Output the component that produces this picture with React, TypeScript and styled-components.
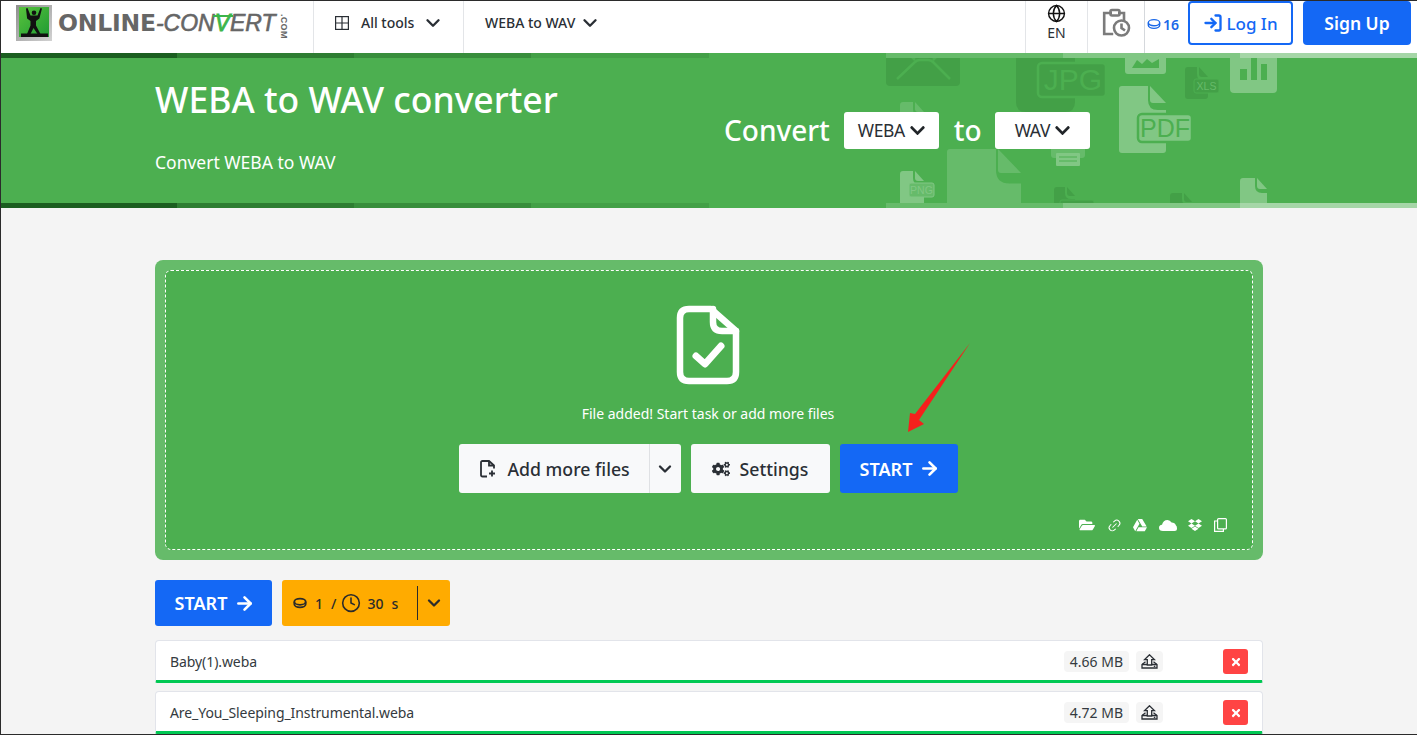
import React from "react";
import styled, { createGlobalStyle } from "styled-components";
import { ArrowRight, ChevronDown, Clock, Globe, Link2, LogIn } from "lucide-react";
import { FaChevronDown, FaCogs, FaDropbox, FaFolderOpen, FaGoogleDrive, FaTimes } from "react-icons/fa";

const Global = createGlobalStyle`
  html, body { margin: 0; padding: 0; background: #f4f4f4; }
  body { font-family: "Noto Sans", "Open Sans", sans-serif; color: #212529; }
  * { box-sizing: border-box; }
`;

const Page = styled.div`
  position: relative;
  width: 1417px;
  height: 735px;
  overflow: hidden;
  background: #f4f4f4;
  border-top: 1px solid #2b2b2b;
  border-left: 1px solid #2b2b2b;
  border-bottom: 1px solid #2b2b2b;
`;

const Header = styled.header`
  display: flex;
  align-items: stretch;
  height: 52px;
  background: #fff;
`;
const LogoBox = styled.a`
  display: flex;
  align-items: flex-start;
  width: 312px;
  padding: 4px 0 0 15px;
`;
const LogoMark = styled.svg`
  width: 36px;
  height: 36px;
  flex: none;
`;
const LogoWord = styled.span`
  display: flex;
  align-items: baseline;
  margin: 0 0 0 6px;
  height: 36px;
  line-height: 36px;
  color: #666;
  white-space: nowrap;
`;
const LogoBold = styled.span`
  font: 700 23.5px/36px "DejaVu Sans", sans-serif;
  letter-spacing: -0.2px;
`;
const LogoItalic = styled.span`
  font: italic 400 23px/36px "Liberation Sans", sans-serif;
  -webkit-text-stroke: 0.6px #666;
`;
const LogoV = styled.span`
  position: relative;
  color: #3cb54a;
  -webkit-text-stroke: 0.8px #3cb54a;
  &::before {
    content: "";
    position: absolute;
    left: -2px;
    top: 5px;
    width: 20px;
    height: 2px;
    background: #3cb54a;
  }
`;
const LogoCom = styled.span`
  font: 700 9px/9px "Liberation Sans", sans-serif;
  color: #666;
  writing-mode: vertical-rl;
  margin: 9px 0 0 3px;
  align-self: flex-start;
  letter-spacing: 0.3px;
`;

const NavItem = styled.div<{ $w: number }>`
  display: flex;
  align-items: center;
  width: ${(p) => p.$w}px;
  padding: 0 0 9px 21px;
  border-left: 1px solid #e3e5e8;
  font-size: 14px;
  font-weight: 500;
  color: #2a2f35;
  &:last-of-type { border-right: 1px solid #e3e5e8; }
`;
const GridIcon = styled.svg`
  width: 14px;
  height: 14px;
  margin-right: 12px;
  flex: none;
`;
const NavCaret = styled(ChevronDown)<{ $ml: number }>`
  margin-left: ${(p) => p.$ml}px;
  flex: none;
`;
const HeaderRight = styled.div`
  display: flex;
  align-items: stretch;
  margin-left: auto;
  padding-right: 6px;
`;
const LangBox = styled.div`
  display: flex;
  flex-direction: column;
  align-items: center;
  width: 62px;
  padding-top: 3px;
  border-left: 1px solid #e3e5e8;
  font-size: 14px;
  line-height: 20px;
  color: #2a2f35;
`;
const HistoryBox = styled.div`
  display: flex;
  align-items: flex-start;
  justify-content: center;
  width: 58px;
  padding-top: 7px;
  border-left: 1px solid #e3e5e8;
  border-right: 1px solid #d5d8dc;
`;
const Credits = styled.div`
  display: flex;
  align-items: center;
  gap: 2px;
  width: 43px;
  padding: 0 0 6px 2px;
  color: #1a68e8;
  font-size: 14px;
  font-weight: 600;
`;
const LoginBtn = styled.button`
  display: flex;
  align-items: center;
  justify-content: center;
  gap: 3px;
  width: 105px;
  height: 44px;
  padding: 0;
  background: #fff;
  border: 2px solid #1468f5;
  border-radius: 4px;
  color: #1468f5;
  font: 500 17px "Noto Sans", sans-serif;
`;
const SignupBtn = styled.button`
  width: 108px;
  height: 44px;
  margin-left: 10px;
  padding: 0;
  background: #1468f5;
  border: 0;
  border-radius: 4px;
  color: #fff;
  font: 600 17.5px "Noto Sans", sans-serif;
`;

const Hero = styled.section`
  position: relative;
  display: flex;
  flex-direction: column;
  height: 155px;
  background: #4caf50;
`;
const Decor = styled.svg`
  position: absolute;
  left: 879px;
  top: 0;
  width: 420px;
  height: 155px;
`;
const Stripes = styled.div`
  position: relative;
  display: grid;
  grid-template-columns: 176px 177px 177px 178px 177px 177px 177px 177px;
  height: 5px;
  flex: none;
`;
const Stripe = styled.i<{ $c: string }>`
  background: ${(p) => p.$c};
`;
const HeroBody = styled.div`
  position: relative;
  flex: 1;
  display: flex;
  padding-left: 154px;
`;
const HeroLeft = styled.div`
  width: 569px;
  flex: none;
`;
const Title = styled.h1`
  margin: 16px 0 0;
  font-size: 35.5px;
  line-height: 50px;
  font-weight: 500;
  color: #fff;
`;
const Subtitle = styled.p`
  margin: 25px 0 0;
  font-size: 17.5px;
  line-height: 26px;
  color: #fff;
`;
const ConvertRow = styled.div`
  display: flex;
  align-items: center;
  height: 37px;
  margin-top: 54px;
  color: #fff;
  font-size: 28px;
  line-height: 35px;
  font-weight: 500;
`;
const ConvertLabel = styled.span<{ $l: number; $r: number }>`
  margin: 0 ${(p) => p.$r}px 0 ${(p) => p.$l}px;
  padding-bottom: 1px;
`;
const FormatSelect = styled.div<{ $pad: number }>`
  display: flex;
  align-items: center;
  justify-content: flex-start;
  gap: 4px;
  width: 95px;
  height: 37px;
  padding-left: ${(p) => p.$pad}px;
  background: #fff;
  border-radius: 3px;
  font-size: 17.5px;
  font-weight: 400;
  letter-spacing: -0.4px;
  color: #2a2f35;
`;

const Main = styled.main`
  padding: 52px 154px 0;
`;
const Panel = styled.section`
  height: 300px;
  padding: 10px;
  background: #66bb6a;
  border-radius: 8px;
`;
const Drop = styled.div`
  display: flex;
  flex-direction: column;
  align-items: center;
  height: 280px;
  padding: 34px 26px 0 24px;
  background: #4caf50;
  border: 1px dashed #fff;
  border-radius: 6px;
  color: #fff;
`;
const FileCheckIcon = styled.svg`
  width: 64px;
  height: 80px;
  flex: none;
`;
const DropText = styled.p`
  margin: 19px 0 0;
  font-size: 14px;
  line-height: 20px;
  color: #fff;
`;
const Buttons = styled.div`
  display: flex;
  gap: 10px;
  margin-top: 20px;
`;
const LightBtn = styled.div`
  display: flex;
  align-items: center;
  height: 49px;
  background: #f8f9fa;
  border-radius: 3px;
  font-size: 17.7px;
  font-weight: 500;
  color: #2a2f35;
`;
const AddMain = styled.span`
  display: flex;
  align-items: center;
  gap: 11px;
  width: 191px;
  height: 100%;
  padding-left: 21px;
  border-right: 1px solid #dfe1e4;
`;
const AddCaret = styled.span`
  display: flex;
  align-items: center;
  justify-content: center;
  width: 31px;
`;
const SettingsBtn = styled(LightBtn)`
  width: 139px;
  justify-content: center;
  gap: 10px;
`;
const StartBtn = styled.button<{ $w: number; $h: number }>`
  display: flex;
  align-items: center;
  justify-content: center;
  gap: 7px;
  width: ${(p) => p.$w}px;
  height: ${(p) => p.$h}px;
  padding: 0 0 0 3px;
  background: #1468f5;
  border: 0;
  border-radius: 3px;
  color: #fff;
  font: 600 18px "Noto Sans", sans-serif;
`;
const Sources = styled.div`
  display: flex;
  align-items: center;
  align-self: flex-end;
  gap: 11.6px;
  margin: 23px -1px 0 0;
  height: 18px;
  color: #fff;
`;
const Actions = styled.div`
  display: flex;
  gap: 10px;
  margin-top: 20px;
`;
const CostBtn = styled.div`
  display: flex;
  align-items: center;
  width: 168px;
  height: 46px;
  padding-left: 11px;
  background: #ffab00;
  border-radius: 3px;
  font-size: 14px;
  font-weight: 500;
  color: #2b2b2b;
`;
const CostPart = styled.span`
  display: flex;
  align-items: center;
  gap: 8px;
  width: 124px;
`;
const CostClock = styled(Clock)`
  margin: 0 -2px 0 -3px;
`;
const CostSep = styled.span`
  width: 1px;
  height: 34px;
  background: #2b2b2b;
`;
const CostCaret = styled.span`
  display: flex;
  flex: 1;
  justify-content: center;
`;
const Files = styled.div`
  display: flex;
  flex-direction: column;
  gap: 8px;
  margin-top: 14px;
`;
const FileRow = styled.div`
  display: flex;
  align-items: center;
  height: 43px;
  padding: 2px 14px 0;
  background: #fff;
  border: 1px solid #e2e4ea;
  border-bottom: 3px solid #00c853;
  border-radius: 4px 4px 2px 2px;
  font-size: 14px;
  color: #343a40;
`;
const FileName = styled.span`
  flex: 1;
  letter-spacing: -0.08px;
`;
const Chip = styled.span<{ $p: number }>`
  display: flex;
  align-items: center;
  justify-content: center;
  height: 21px;
  padding: 0 ${(p) => p.$p}px;
  margin-left: 7px;
  background: #f5f5f5;
  border-radius: 4px;
`;
const RemoveBtn = styled.button`
  display: flex;
  align-items: center;
  justify-content: center;
  width: 25px;
  height: 25px;
  margin: 0 0 0 60px;
  padding: 0;
  background: #ff4444;
  border: 0;
  border-radius: 3px;
  color: #fff;
`;
const RedArrow = styled.svg`
  position: absolute;
  left: 899px;
  top: 335px;
  width: 80px;
  height: 105px;
`;

const greens = ["#1b5e20", "#2e7d32", "#388e3c", "#43a047", "#4caf50", "#66bb6a", "#81c784", "#a5d6a7"];

const Coin = ({ s = 16, c = "currentColor", w = 1.6 }: { s?: number; c?: string; w?: number }) => (
  <svg width={s} height={s} viewBox="0 0 16 16" fill="none" stroke={c} strokeWidth={w}>
    <ellipse cx="8" cy="6.500" rx="6.500" ry="3.500" />
    <path d="M1.500 6.500v3c0 1.900 2.900 3.500 6.500 3.500s6.500-1.600 6.500-3.500v-3" />
  </svg>
);

const UploadTray = () => (
  <svg width="17" height="15" viewBox="0 0 17 15" fill="none" stroke="#2a2f35" strokeWidth="1.300">
    <path d="M4.500 7.800 1 10.500V14h15v-3.500l-3.500-2.700" />
    <path d="M1 10.500h5M11 10.500h5" />
    <path d="M8.500 .8 3.600 5.600h2.700v5.400h4.400V5.600h2.700z" fill="#f5f5f5" />
    <path d="M12.800 12.300h1.500" />
  </svg>
);

const FileIconShape = ({ x, y, w, h, c, fold = 12 }: { x: number; y: number; w: number; h: number; c: string; fold?: number }) => (
  <g fill={c}>
    <path d={`M${x + 3} ${y}H${x + w - fold - 2}v${fold - 2}q0 ${fold / 2 + 2} ${fold / 2 + 2} ${fold / 2 + 2}H${x + w}V${y + h - 3}q0 3-3 3H${x + 3}q-3 0-3-3V${y + 3}q0-3 3-3z`} />
    <path d={`M${x + w - fold} ${y}L${x + w} ${y + fold + 1}H${x + w - fold + 3}q-3 0-3-3z`} />
  </g>
);

const HeroDecor = () => (
  <Decor viewBox="880 53 420 155">
    <rect x="886" y="40" width="74" height="46" rx="4" fill="#43a047" />
    <path d="M897 79 915 62q2-2 5-2h8q3 0 5 2l17 17M908 53l7 7M940 53l-7 7" stroke="#4caf50" strokeWidth="2.500" fill="none" />
    <path d="M1016 40h59v62q0 10-10 10h-39q-10 0-10-10z" fill="#43a047" />
    <rect x="1038" y="63" width="68" height="34" rx="4" fill="#43a047" stroke="#4caf50" strokeWidth="2.500" />
    <text x="1073" y="90" textAnchor="middle" fontSize="30" fontFamily="Liberation Sans" fill="#4caf50">JPG</text>
    <rect x="1125" y="40" width="41" height="34" rx="3" fill="#81c784" />
    <path d="M1132 68l5-8 5 4 5-5 5 4 7-4v9z" fill="#4caf50" />
    <FileIconShape x={1185} y={67} w={23} h={32} c="#43a047" fold={9} />
    <rect x="1194" y="79" width="25" height="14" rx="2" fill="#43a047" stroke="#4caf50" strokeWidth="1" />
    <text x="1206.500" y="90" textAnchor="middle" fontSize="10.500" fontFamily="Liberation Sans" fill="#66bb6a">XLS</text>
    <rect x="1230" y="40" width="47" height="53" rx="4" fill="#81c784" />
    <path d="M1240 69h7v11h-7zM1251 58h6v22h-6zM1261 64h6v16h-6z" fill="#4caf50" />
    <FileIconShape x={900} y={102} w={24} h={20} c="#66bb6a" fold={9} />
    <FileIconShape x={1119} y={86} w={47} h={67} c="#81c784" fold={16} />
    <rect x="1138" y="114" width="54" height="28" rx="4" fill="#81c784" stroke="#4caf50" strokeWidth="2.500" />
    <text x="1165" y="137" textAnchor="middle" fontSize="25" fontFamily="Liberation Sans" fill="#4caf50">PDF</text>
    <rect x="1051" y="140" width="34" height="18" rx="3" fill="#66bb6a" />
    <rect x="1056" y="153" width="24" height="13" rx="1" fill="#81c784" />
    <path d="M1059 157h18M1059 161h18" stroke="#4caf50" />
    <FileIconShape x={947} y={149} w={74} h={60} c="#66bb6a" fold={23} />
    <FileIconShape x={900} y={171} w={24} h={36} c="#81c784" fold={9} />
    <rect x="909" y="183" width="25" height="14" rx="2" fill="#66bb6a" stroke="#81c784" strokeWidth="1" />
    <text x="921.500" y="194" textAnchor="middle" fontSize="10.500" fontFamily="Liberation Sans" fill="#81c784">PNG</text>
    <FileIconShape x={1054} y={187} w={21} h={24} c="#43a047" fold={8} />
    <rect x="1060" y="200" width="34" height="12" rx="2" fill="#43a047" stroke="#4caf50" />
    <FileIconShape x={1170} y={193} w={22} h={16} c="#43a047" fold={8} />
    <FileIconShape x={1240} y={178} w={27} h={32} c="#81c784" fold={10} />
  </Decor>
);

export default function App() {
  return (
    <>
      <Global />
      <Page>
        <Header>
          <LogoBox>
            <LogoMark viewBox="0 0 36 36">
              <defs>
                <linearGradient id="frame" x1="0" y1="0" x2="1" y2="1">
                  <stop offset="0" stopColor="#8e8e8e" />
                  <stop offset="1" stopColor="#d2d2d2" />
                </linearGradient>
                <linearGradient id="lawn" x1="0" y1="0" x2="1" y2="1">
                  <stop offset="0" stopColor="#58c33c" />
                  <stop offset="1" stopColor="#1f9a34" />
                </linearGradient>
              </defs>
              <rect width="36" height="36" fill="url(#frame)" />
              <rect x="3" y="2" width="30" height="30" fill="url(#lawn)" />
              <path d="M10 3.500l1.500-.5 3 7.500h7l3-7.500 1.500.5-2.600 10-3.400 2.500v4.500l4.500 8.500h-3l-4-6-3 6h-3.500l3.500-8.500V16l-3.400-2.500z" fill="#111" />
              <circle cx="18" cy="7.800" r="2.300" fill="#111" />
              <rect x="5" y="28.500" width="27" height="3.500" fill="#111" />
            </LogoMark>
            <LogoWord>
              <LogoBold>ONLINE</LogoBold>
              <LogoItalic>
                -CON<LogoV>V</LogoV>ERT
              </LogoItalic>
              <LogoCom>.COM</LogoCom>
            </LogoWord>
          </LogoBox>
          <NavItem $w={150}>
            <GridIcon viewBox="0 0 14 14" fill="none" stroke="#2a2f35" strokeWidth="1.200">
              <rect x=".6" y=".6" width="12.800" height="12.800" />
              <path d="M7 .6v12.800M.6 7h12.800" />
            </GridIcon>
            All tools
            <NavCaret $ml={8} size={22} strokeWidth={2.600} />
          </NavItem>
          <NavItem $w={158}>
            WEBA to WAV
            <NavCaret $ml={4} size={22} strokeWidth={2.600} />
          </NavItem>
          <HeaderRight>
            <LangBox>
              <Globe size={19} strokeWidth={1.800} color="#111" />
              EN
            </LangBox>
            <HistoryBox>
              <svg width="30" height="30" viewBox="0 0 30 30" fill="none" stroke="#7b7b7b" strokeWidth="2.600">
                <path d="M11 5H3.200v21h9" />
                <path d="M17 5h6v8" />
                <rect x="9.500" y="2" width="9" height="5.500" rx="1.500" />
                <circle cx="20.500" cy="20" r="7.500" />
                <path d="M20.500 15.500V20l3.500 2.500" />
              </svg>
            </HistoryBox>
            <Credits>
              <Coin s={14} />
              16
            </Credits>
            <LoginBtn>
              <LogIn size={20} strokeWidth={2.800} />
              Log In
            </LoginBtn>
            <SignupBtn>Sign Up</SignupBtn>
          </HeaderRight>
        </Header>
        <Hero>
          <HeroDecor />
          <Stripes>
            {greens.map((c) => (
              <Stripe key={c} $c={c} />
            ))}
          </Stripes>
          <HeroBody>
            <HeroLeft>
              <Title>WEBA to WAV converter</Title>
              <Subtitle>Convert WEBA to WAV</Subtitle>
            </HeroLeft>
            <ConvertRow>
              <ConvertLabel $l={0} $r={14}>Convert</ConvertLabel>
              <FormatSelect $pad={14}>
                WEBA
                <FaChevronDown size={17} color="#212529" />
              </FormatSelect>
              <ConvertLabel $l={15} $r={13}>to</ConvertLabel>
              <FormatSelect $pad={20}>
                WAV
                <FaChevronDown size={17} color="#212529" />
              </FormatSelect>
            </ConvertRow>
          </HeroBody>
          <Stripes>
            {greens.map((c) => (
              <Stripe key={c} $c={c} />
            ))}
          </Stripes>
        </Hero>
        <Main>
          <Panel>
            <Drop>
              <FileCheckIcon viewBox="0 0 64 80" fill="none" stroke="#fff" strokeWidth="6.500" strokeLinecap="round" strokeLinejoin="round">
                <path d="M35 4H13Q4 4 4 13v54q0 9 9 9h38q9 0 9-9V26z" />
                <path d="M37 4v13q0 9 9 9h14" />
                <path d="M20 51l9 8 16-18" strokeWidth="7" />
              </FileCheckIcon>
              <DropText>File added! Start task or add more files</DropText>
              <Buttons>
                <LightBtn>
                  <AddMain>
                    <svg width="17" height="18" viewBox="0 0 17 18" fill="none" stroke="#2a2f35" strokeWidth="1.800">
                      <path d="M7 16.500H2.500q-1.500 0-1.500-1.500V2.500q0-1.500 1.500-1.500H9l5 4.500v3" />
                      <path d="M9 1v4.500h5" />
                      <path d="M12 10.500v6M9 13.500h6" />
                    </svg>
                    Add more files
                  </AddMain>
                  <AddCaret>
                    <ChevronDown size={20} strokeWidth={2.800} />
                  </AddCaret>
                </LightBtn>
                <SettingsBtn>
                  <FaCogs size={18} />
                  Settings
                </SettingsBtn>
                <StartBtn $w={118} $h={49}>
                  START
                  <ArrowRight size={21} strokeWidth={3} />
                </StartBtn>
              </Buttons>
              <Sources>
                <FaFolderOpen size={16} />
                <Link2 size={15} strokeWidth={1.600} style={{ transform: "rotate(-45deg)" }} />
                <FaGoogleDrive size={14} />
                <svg width="18" height="12" viewBox="0 0 18 12" fill="#fff">
                  <path d="M4 12Q0 12 0 8.800 0 6 3 5.700 4.200 1 8.500 1 11 1 12.600 3.500 16 3.500 17 6.500 18 7 18 9.500 18 12 15.500 12z" />
                </svg>
                <FaDropbox size={14} />
                <svg width="13" height="14" viewBox="0 0 13 14" fill="none" stroke="#fff" strokeWidth="1.200">
                  <rect x="3.600" y=".6" width="8.800" height="10.300" rx="1" />
                  <path d="M3.600 3H.6v10.400h8.800v-2.500" />
                </svg>
              </Sources>
            </Drop>
          </Panel>
          <Actions>
            <StartBtn $w={117} $h={46}>
              START
              <ArrowRight size={21} strokeWidth={3} />
            </StartBtn>
            <CostBtn>
              <CostPart>
                <Coin s={14} c="#2b2b2b" w={2} />
                <span>1</span>
                <span>/</span>
                <CostClock size={20} strokeWidth={1.900} />
                <span>30</span>
                <span>s</span>
              </CostPart>
              <CostSep />
              <CostCaret>
                <ChevronDown size={20} strokeWidth={2.800} />
              </CostCaret>
            </CostBtn>
          </Actions>
          <Files>
            <FileRow>
              <FileName>Baby(1).weba</FileName>
              <Chip $p={6}>4.66 MB</Chip>
              <Chip $p={5}><UploadTray /></Chip>
              <RemoveBtn><FaTimes size={12} /></RemoveBtn>
            </FileRow>
            <FileRow>
              <FileName>Are_You_Sleeping_Instrumental.weba</FileName>
              <Chip $p={6}>4.72 MB</Chip>
              <Chip $p={5}><UploadTray /></Chip>
              <RemoveBtn><FaTimes size={12} /></RemoveBtn>
            </FileRow>
          </Files>
        </Main>
        <RedArrow viewBox="900 336 80 105">
          <polygon points="970,343 915,414 910,413 908,432 924,424 919,420" fill="#f5201c" />
        </RedArrow>
      </Page>
    </>
  );
}
